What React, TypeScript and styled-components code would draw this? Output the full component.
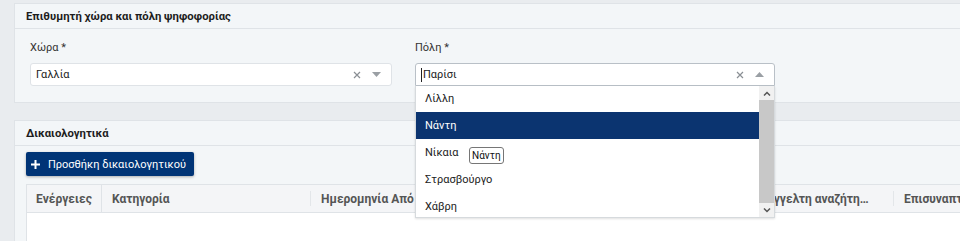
import styled, { createGlobalStyle } from 'styled-components';

const cities = ['Λίλλη', 'Νάντη', 'Νίκαια', 'Στρασβούργο', 'Χάβρη'];

const columns = [
  { title: 'Ενέργειες', width: 75, full: true },
  { title: 'Κατηγορία', width: 209 },
  { title: 'Ημερομηνία Από', width: 171 },
  { title: 'Ημερομηνία Έως', width: 170 },
  { title: 'Ημερομηνία Προαναγγελτη αναζήτησης', width: 242 },
  { title: 'Επισυναπτόμενα', width: 200 },
];

function ClearIcon() {
  return (
    <svg width="8" height="8" viewBox="0 0 8 8">
      <path d="M1 1 L7 7 M7 1 L1 7" stroke="#8a8f94" strokeWidth="1.2" />
    </svg>
  );
}

function Caret({ up }: { up?: boolean }) {
  return (
    <svg width="9" height="5" viewBox="0 0 9 5">
      <path d={up ? 'M0 5 L4.5 0 L9 5 Z' : 'M0 0 L4.5 5 L9 0 Z'} fill="#9a9fa4" />
    </svg>
  );
}

function Chevron({ up }: { up?: boolean }) {
  return (
    <svg width="8" height="5" viewBox="0 0 8 5">
      <path
        d={up ? 'M1 4.5 L4 1.5 L7 4.5' : 'M1 0.5 L4 3.5 L7 0.5'}
        stroke="#555"
        strokeWidth="1.5"
        fill="none"
      />
    </svg>
  );
}

function App() {
  return (
    <>
      <GlobalStyle />
      <Page>
        <Card>
          <CardHeader>Επιθυμητή χώρα και πόλη ψηφοφορίας</CardHeader>
          <FieldsBody>
            <Field>
              <Label>Χώρα *</Label>
              <SelectBox>
                <SelectValue>Γαλλία</SelectValue>
                <SelectIcons>
                  <ClearIcon />
                  <Caret />
                </SelectIcons>
              </SelectBox>
            </Field>
            <Field>
              <Label>Πόλη *</Label>
              <SelectBox $focused>
                <SelectValue>
                  <Cursor />
                  Παρίσι
                </SelectValue>
                <SelectIcons>
                  <ClearIcon />
                  <Caret up />
                </SelectIcons>
              </SelectBox>
              <Menu>
                <OptionList>
                  {cities.map((city) => (
                    <Option key={city} $active={city === 'Νάντη'}>
                      {city}
                    </Option>
                  ))}
                </OptionList>
                <ScrollBar>
                  <ScrollButton>
                    <Chevron up />
                  </ScrollButton>
                  <ScrollThumb />
                  <ScrollButton>
                    <Chevron />
                  </ScrollButton>
                </ScrollBar>
                <Tooltip>Νάντη</Tooltip>
              </Menu>
            </Field>
          </FieldsBody>
        </Card>

        <Card $grow>
          <CardHeader>Δικαιολογητικά</CardHeader>
          <DocsBody>
            <AddButton>
              <svg width="9" height="9" viewBox="0 0 9 9">
                <path d="M4.5 0 V9 M0 4.5 H9" stroke="#fff" strokeWidth="2" />
              </svg>
              Προσθήκη δικαιολογητικού
            </AddButton>
            <Table>
              <HeaderRow>
                {columns.map((col) => (
                  <HeaderCell key={col.title} $width={col.width} $full={col.full}>
                    <HeaderText $center={col.full}>{col.title}</HeaderText>
                  </HeaderCell>
                ))}
              </HeaderRow>
              <TableBody />
            </Table>
          </DocsBody>
        </Card>
      </Page>
    </>
  );
}

const GlobalStyle = createGlobalStyle`
  body {
    margin: 0;
    background: #e9ecef;
    font-family: Roboto, 'Noto Sans', 'Liberation Sans', sans-serif;
    font-size: 11px;
    color: #222;
  }
`;

const Page = styled.div`
  width: 960px;
  height: 241px;
  overflow: hidden;
  padding: 3px 0 0 14px;
  box-sizing: border-box;
  display: flex;
  flex-direction: column;
  gap: 17px;
`;

const Card = styled.section<{ $grow?: boolean }>`
  width: 1000px;
  flex: ${(p) => (p.$grow ? '1 0 auto' : 'none')};
  background: #f3f6f8;
  border: 1px solid #dfe3e7;
  border-right: none;
`;

const CardHeader = styled.div`
  height: 24px;
  padding: 0 11px;
  display: flex;
  align-items: center;
  font-size: 11.3px;
  font-weight: 700;
  color: #1d1d1d;
  border-bottom: 1px solid #dfe3e7;
`;

const FieldsBody = styled.div`
  display: grid;
  grid-template-columns: 362px 360px;
  column-gap: 23px;
  padding: 11px 15px 16px;
`;

const Field = styled.div`
  position: relative;
  display: flex;
  flex-direction: column;
  gap: 8px;
`;

const Label = styled.label`
  line-height: 15px;
  color: #333;
`;

const SelectBox = styled.div<{ $focused?: boolean }>`
  height: 23px;
  box-sizing: border-box;
  background: #fff;
  border: 1px solid ${(p) => (p.$focused ? '#b9c0c7' : '#dfe3e7')};
  border-radius: ${(p) => (p.$focused ? '3px 3px 0 0' : '3px')};
  display: flex;
  align-items: center;
  justify-content: space-between;
  padding: 0 10px 0 5px;
`;

const SelectValue = styled.span`
  display: flex;
  align-items: center;
  color: #222;
`;

const Cursor = styled.span`
  width: 1px;
  height: 14px;
  background: #222;
  margin-right: 1px;
`;

const SelectIcons = styled.span`
  display: flex;
  align-items: center;
  gap: 11px;
`;

const Menu = styled.div`
  position: absolute;
  top: 100%;
  left: 0;
  width: 360px;
  height: 132px;
  box-sizing: border-box;
  background: #fff;
  border: 1px solid #d6dadd;
  border-top: none;
  box-shadow: 0 1px 2px rgba(0, 0, 0, 0.12);
  display: flex;
  z-index: 10;
`;

const OptionList = styled.ul`
  flex: 1;
  list-style: none;
  margin: -1px 0 0;
  padding: 0;
  overflow: hidden;
`;

const Option = styled.li<{ $active?: boolean }>`
  height: 27px;
  padding: 0 9px;
  display: flex;
  align-items: center;
  background: ${(p) => (p.$active ? '#0b3470' : 'transparent')};
  color: ${(p) => (p.$active ? '#fff' : '#222')};
`;

const ScrollBar = styled.div`
  width: 15px;
  display: flex;
  flex-direction: column;
  background: #f1f1f1;
`;

const ScrollButton = styled.div`
  height: 14px;
  display: flex;
  align-items: center;
  justify-content: center;
  flex: none;
`;

const ScrollThumb = styled.div`
  flex: 1;
  background: #c8c8c8;
`;

const Tooltip = styled.div`
  position: absolute;
  left: 53px;
  top: 61px;
  padding: 1px 2px;
  font-size: 10px;
  line-height: 13px;
  color: #111;
  background: #fff;
  border: 1px solid #767676;
  border-radius: 3px;
`;

const DocsBody = styled.div`
  padding: 6px 0 0 11px;
  display: flex;
  flex-direction: column;
  align-items: flex-start;
  gap: 8px;
`;

const AddButton = styled.button`
  height: 24px;
  padding: 0 8px 0 5px;
  display: flex;
  align-items: center;
  gap: 8px;
  border: none;
  border-radius: 2px;
  background: #003476;
  color: #fff;
  font-family: inherit;
  font-size: 11px;
  font-weight: 400;
  box-shadow: 0 1px 3px rgba(0, 0, 0, 0.3);
`;

const Table = styled.div`
  width: 990px;
  border: 1px solid #dfe3e7;
  border-right: none;
  background: #fff;
`;

const HeaderRow = styled.div`
  display: flex;
  height: 27px;
  background: #f4f5f7;
  border-bottom: 1px solid #dfe3e7;
`;

const HeaderCell = styled.div<{ $width: number; $full?: boolean }>`
  position: relative;
  flex: none;
  width: ${(p) => p.$width}px;
  box-sizing: border-box;
  padding: ${(p) => (p.$full ? '0 4px' : '0 24px 0 10px')};
  display: flex;
  align-items: center;
  border-right: ${(p) => (p.$full ? '1px solid #dfe3e7' : 'none')};

  &::after {
    content: '';
    display: ${(p) => (p.$full ? 'none' : 'block')};
    position: absolute;
    right: 0;
    top: 6px;
    bottom: 6px;
    width: 1px;
    background: #e3e6e9;
  }
`;

const HeaderText = styled.span<{ $center?: boolean }>`
  flex: 1;
  text-align: ${(p) => (p.$center ? 'center' : 'left')};
  font-size: 12px;
  font-weight: 700;
  color: #555;
  white-space: nowrap;
  overflow: hidden;
  text-overflow: ellipsis;
`;

const TableBody = styled.div`
  height: 40px;
`;

export default App;
